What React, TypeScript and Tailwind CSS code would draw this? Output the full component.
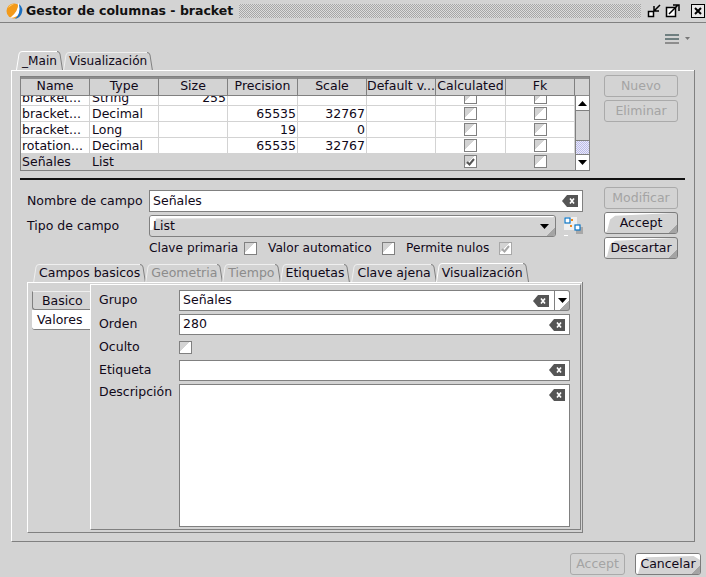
import type { ReactNode } from "react";

const font = "font-['DejaVu_Sans',sans-serif]";

const columns = [
  { name: "Name", w: "w-[69px]" },
  { name: "Type", w: "w-[69px]" },
  { name: "Size", w: "w-[69px]" },
  { name: "Precision", w: "w-[70px]" },
  { name: "Scale", w: "w-[69px]" },
  { name: "Default v...", w: "w-[69px]" },
  { name: "Calculated", w: "w-[70px]" },
  { name: "Fk", w: "w-[69px]" },
];

const rows = [
  { name: "bracket...", type: "String", size: "255", precision: "", scale: "" },
  { name: "bracket...", type: "Decimal", size: "", precision: "65535", scale: "32767" },
  { name: "bracket...", type: "Long", size: "", precision: "19", scale: "0" },
  { name: "rotation...", type: "Decimal", size: "", precision: "65535", scale: "32767" },
  { name: "Señales", type: "List", size: "", precision: "", scale: "", selected: true },
];

function Bevel({ points }: { points: string }) {
  return (
    <>
      <svg
        className="absolute inset-0 h-full w-full"
        viewBox="0 0 100 100"
        preserveAspectRatio="none"
      >
        <polygon points={points} fill="#fff" />
      </svg>
      <div className="absolute bottom-0 right-0 h-[8px] w-[8px] bg-[linear-gradient(135deg,transparent_50%,#a4a4a4_50%)]" />
    </>
  );
}

function Button({
  label,
  w,
  disabled,
  strong,
}: {
  label: string;
  w: string;
  disabled?: boolean;
  strong?: boolean;
}) {
  return (
    <div
      className={`relative flex h-[22px] items-center justify-center overflow-hidden rounded-[3px] border ${w} ${
        disabled ? "border-[#aaaaaa] text-[#a4a4a4]" : "border-[#7c7c7c] text-[#100818]"
      }`}
    >
      {!disabled && (
        <Bevel
          points={
            strong
              ? "0,0 100,0 100,30 90,10 16,16 8,45 3,100 0,100"
              : "0,0 96,0 14,14 7,32 3,90 0,100"
          }
        />
      )}
      <span className="relative">{label}</span>
    </div>
  );
}

function Check({ checked, dim }: { checked?: boolean; dim?: boolean }) {
  return (
    <div
      className={`flex h-[13px] w-[13px] shrink-0 items-center justify-center border ${
        dim ? "border-[#a8a8a8]" : "border-[#808080]"
      } bg-[linear-gradient(135deg,#d3d3d3_45%,#ffffff_45%)]`}
    >
      {checked && (
        <svg width="9" height="8" viewBox="0 0 9 8">
          <path
            d="M1 4l2.5 2.5L8 1"
            fill="none"
            stroke={dim ? "#a8a8a8" : "#555"}
            strokeWidth="2"
          />
        </svg>
      )}
    </div>
  );
}

function ClearIcon() {
  return (
    <svg width="16" height="12" viewBox="0 0 16 12" className="shrink-0">
      <path d="M0 6L5 0h11v12H5z" fill="#555" />
      <path d="M8 3.5l4 5M12 3.5l-4 5" stroke="#fff" strokeWidth="1.6" />
    </svg>
  );
}

function Field({
  value,
  h = "h-[22px]",
  w,
  top,
}: {
  value?: string;
  h?: string;
  w: string;
  top?: boolean;
}) {
  return (
    <div
      className={`flex justify-between border border-[#808080] bg-white pl-[3px] pr-1 ${h} ${w} ${
        top ? "items-start pt-[4px]" : "items-center"
      }`}
    >
      <span>{value}</span>
      <ClearIcon />
    </div>
  );
}

function Caret({ up }: { up?: boolean }) {
  return (
    <svg width="9" height="5" viewBox="0 0 9 5">
      <path d={up ? "M0 5L4.5 0 9 5z" : "M0 0l4.5 5L9 0z"} fill="#000" />
    </svg>
  );
}

function Tab({
  label,
  active,
  disabled,
  lower,
  extra = "",
}: {
  label: string;
  active?: boolean;
  disabled?: boolean;
  lower?: boolean;
  extra?: string;
}) {
  return (
    <div
      className={`flex items-stretch ${active ? "h-[19px]" : "h-[18px]"} ${
        disabled ? "text-[#8c8c8c]" : "text-[#100818]"
      } ${lower ? "-mr-px" : ""} ${extra}`}
    >
      <svg width="6" height="19" viewBox="0 0 6 19" className="shrink-0">
        <path d="M0.5 19L3 3Q3.5 .5 6 .5" fill="none" stroke={active ? "#fff" : "#efefef"} />
      </svg>
      <div
        className={`flex items-center whitespace-nowrap border-t ${
          active ? "border-white" : "border-[#efefef]"
        }`}
      >
        {label}
      </div>
      <svg width="6" height="19" viewBox="0 0 6 19" className="shrink-0">
        <path d="M0 .5Q2.5 .5 3 3L5.5 19" fill="none" stroke="#808080" />
      </svg>
    </div>
  );
}

function Table() {
  return (
    <div className="flex h-[95px] w-[570px] flex-col border border-[#808080]">
      <div className="flex h-[19px] shrink-0">
        {columns.map((c) => (
          <div
            key={c.name}
            className={`flex items-center justify-center overflow-hidden whitespace-nowrap border-r border-t-2 border-b border-[#808080] border-t-[#8c8c8c] pb-[2px] ${c.w}`}
          >
            {c.name}
          </div>
        ))}
        <div className="flex-1 border-t-2 border-b border-[#8c8c8c]" />
      </div>
      <div className="flex min-h-0 flex-1">
        <div className="flex w-[554px] flex-col justify-end overflow-hidden">
          {rows.map((r, i) => (
            <div
              key={i}
              className={`flex h-4 shrink-0 border-b border-[#d3d3d3] ${
                r.selected ? "bg-[#d3d3d3]" : "bg-white"
              }`}
            >
              <div className="w-[69px] overflow-hidden whitespace-nowrap border-r border-[#d3d3d3] pl-px leading-[16px]">
                {r.name}
              </div>
              <div className="w-[69px] border-r border-[#d3d3d3] pl-[2px] leading-[16px]">
                {r.type}
              </div>
              <div className="w-[69px] border-r border-[#d3d3d3] pr-[1px] text-right leading-[16px]">
                {r.size}
              </div>
              <div className="w-[70px] border-r border-[#d3d3d3] pr-[1px] text-right leading-[16px]">
                {r.precision}
              </div>
              <div className="w-[69px] border-r border-[#d3d3d3] pr-[1px] text-right leading-[16px]">
                {r.scale}
              </div>
              <div className="w-[69px] border-r border-[#d3d3d3]" />
              <div className="flex w-[70px] items-center justify-center border-r border-[#d3d3d3]">
                <Check checked={r.selected} />
              </div>
              <div className="flex w-[69px] items-center justify-center border-r border-[#d3d3d3]">
                <Check />
              </div>
            </div>
          ))}
        </div>
        <div className="flex w-[14px] flex-col border-l border-[#808080]">
          <div className="flex h-[15px] items-center justify-center border-b border-[#808080] bg-white">
            <Caret up />
          </div>
          <div className="flex-1" />
          <div className="h-[15px] border-y border-[#808080] bg-[#cfcff0] bg-[repeating-conic-gradient(#b9b9ee_0_25%,#ececf4_0_50%)] bg-[length:2px_2px]" />
          <div className="flex h-[15px] items-center justify-center bg-white">
            <Caret />
          </div>
        </div>
      </div>
    </div>
  );
}

function FormRow({ label, w, children }: { label: string; w: string; children: ReactNode }) {
  return (
    <div className="flex items-center">
      <div className={w}>{label}</div>
      {children}
    </div>
  );
}

function LinkIcon() {
  return (
    <svg width="20" height="22" viewBox="0 0 20 22" className="ml-[7px]">
      <rect x="1" y="2" width="13" height="13" fill="#f0f0f0" />
      <rect x="2" y="3" width="5" height="5" fill="#fff" stroke="#0a74c4" strokeWidth="1.2" />
      <rect x="8" y="4" width="2" height="2" fill="#f08a1c" />
      <rect x="7" y="10" width="2" height="2" fill="#f08a1c" />
      <rect x="13" y="12" width="7" height="7" fill="#a8a8a8" />
      <rect x="12" y="10" width="5" height="5" fill="#fff" stroke="#0a74c4" strokeWidth="1.2" />
      <rect x="1" y="20" width="4" height="1" fill="#fff" />
    </svg>
  );
}

function TitleBar() {
  return (
    <div className="flex h-[23px] items-center border-b border-[#808080] pl-[6px] pr-px">
      <svg width="18" height="18" viewBox="0 0 18 18" className="shrink-0">
        <circle cx="8" cy="9" r="7.5" fill="#f39a1a" />
        <path d="M2 6a7 7 0 0 1 6-4Q4 4 2 6z" fill="#ffd27a" />
        <path d="M12 1Q13 9 4 16Q12 16 15.5 9Q16 4 12 1z" fill="#fff" />
        <path d="M13 2Q18 6 15.5 12Q13.5 16 9 17Q15 12 13 2z" fill="#1b6fc0" />
      </svg>
      <div className="ml-[2px] whitespace-nowrap text-[12.5px] font-bold text-[#111]">
        Gestor de columnas - bracket
      </div>
      <div className="mx-[6px] h-[14px] flex-1 bg-[repeating-conic-gradient(#a6a6a6_0_25%,#dcdcdc_0_50%)] bg-[length:2px_2px]" />
      <svg width="14" height="14" viewBox="0 0 14 14" className="shrink-0">
        <rect x="1.5" y="7.5" width="5" height="5" fill="#fff" stroke="#000" strokeWidth="1.5" />
        <path d="M13 1L7 7M7 2v5h5" fill="none" stroke="#000" strokeWidth="1.5" />
      </svg>
      <svg width="15" height="14" viewBox="0 0 15 14" className="ml-[4px] shrink-0">
        <rect x="1.5" y="3.5" width="9" height="9" fill="#fff" stroke="#000" strokeWidth="1.5" />
        <path d="M4 10L13 1M8 1h6v6" fill="none" stroke="#000" strokeWidth="1.5" />
      </svg>
      <svg width="14" height="14" viewBox="0 0 14 14" className="ml-[11px] shrink-0">
        <rect x="0.5" y="0.5" width="13" height="13" fill="#e8e8e8" stroke="#000" />
        <path d="M4 4l6 6M10 4l-6 6" stroke="#000" strokeWidth="2" />
      </svg>
    </div>
  );
}

function SideTabs() {
  return (
    <div className="flex w-[62px] shrink-0 flex-col pl-[4px] pt-[9px]">
      <div className="h-[19px] w-[58px] rounded-bl-[3px] border border-r-0 border-[#808080] border-t-[#efefef] pl-[9px] leading-[18px]">
        Basico
      </div>
      <div className="h-[20px] w-[58px] rounded-bl-[3px] border-b border-[#808080] bg-white pl-[5px] leading-[19px]">
        Valores
      </div>
    </div>
  );
}

export default function App() {
  return (
    <div className={`flex h-[577px] w-[706px] flex-col overflow-hidden bg-[#d3d3d3] text-[12.5px] text-[#100818] ${font}`}>
      <TitleBar />

      <div className="flex h-[27px] items-center justify-end pr-[16px] pt-[4px]">
        <svg width="14" height="10" viewBox="0 0 14 10">
          <rect y="0" width="14" height="2" fill="#6f7f80" />
          <rect y="4" width="14" height="2" fill="#6f7f80" />
          <rect y="8" width="14" height="2" fill="#8d8d8d" />
        </svg>
        <svg width="5" height="3" viewBox="0 0 5 3" className="ml-[6px]">
          <path d="M0 0h5L2.5 3z" fill="#777" />
        </svg>
      </div>

      <div className="flex h-[20px] items-end pl-[16px] text-[12.1px]">
        <Tab label="_Main" active />
        <Tab label="Visualización" />
      </div>

      <div className="mx-[11px] flex h-[472px] flex-col border-b border-l border-r border-[#808080] border-l-white border-t-0 shadow-[inset_0_1px_0_#fff]">
        <div className="flex pl-[8px] pt-[6px]">
          <Table />
          <div className="-mt-px ml-[14px] flex flex-col gap-[3px]">
            <Button label="Nuevo" w="w-[74px]" disabled />
            <Button label="Eliminar" w="w-[74px]" disabled />
          </div>
        </div>

        <div className="ml-[8px] mr-[9px] mt-[7px] h-[2px] bg-[#111]" />

        <div className="flex">
          <div className="flex w-[592px] flex-col pl-[15px] pt-[10px]">
            <FormRow label="Nombre de campo" w="w-[122px]">
              <Field value="Señales" w="w-[434px]" />
            </FormRow>
            <div className="mt-[3px]">
              <FormRow label="Tipo de campo" w="w-[122px]">
                <div className="relative flex h-[22px] w-[407px] items-center justify-between overflow-hidden rounded-[3px] border border-[#808080] pl-[3px] pr-[6px]">
                  <Bevel points="0,0 100,0 99.5,6 1.5,12 0.6,70 0,70" />
                  <span className="relative">List</span>
                  <span className="relative">
                    <Caret />
                  </span>
                </div>
                <LinkIcon />
              </FormRow>
            </div>
            <div className="ml-[122px] mt-[4px] flex h-[15px] items-center whitespace-nowrap text-[12.2px]">
              <span className="w-[95px]">Clave primaria</span>
              <Check />
              <span className="ml-[11px] w-[114px]">Valor automatico</span>
              <Check />
              <span className="ml-[11px] w-[93px]">Permite nulos</span>
              <Check checked dim />
            </div>

            <div className="mt-[6px] flex h-[20px] items-end pl-[6px]">
              <Tab label="Campos basicos" lower />
              <Tab label="Geometria" disabled lower />
              <Tab label="Tiempo" disabled lower />
              <Tab label="Etiquetas" lower />
              <Tab label="Clave ajena" lower extra="ml-[2px]" />
              <Tab label="Visualización" active lower />
            </div>

            <div className="flex h-[251px] w-[556px] border-b border-l border-r border-[#808080] border-l-white shadow-[inset_0_1px_0_#fff]">
              <SideTabs />
              <div className="my-[2px] flex w-[491px] flex-col border border-[#808080] border-l-white border-t-white pl-[8px] pt-[5px]">
                <FormRow label="Grupo" w="w-[80px]">
                  <div className="flex h-[21px] w-[391px] items-center">
                    <div className="flex h-full flex-1 items-center justify-between border border-[#808080] bg-white pl-[3px] pr-[5px]">
                      <span>Señales</span>
                      <ClearIcon />
                    </div>
                    <div className="flex h-full w-[15px] items-center justify-center rounded-r-[3px] border border-l-0 border-[#808080] bg-[linear-gradient(135deg,#ffffff_70%,#a8a8a8_70%)]">
                      <Caret />
                    </div>
                  </div>
                </FormRow>
                <div className="mt-[3px]">
                  <FormRow label="Orden" w="w-[80px]">
                    <Field value="280" h="h-[21px]" w="w-[391px]" />
                  </FormRow>
                </div>
                <div className="mt-[3px]">
                  <FormRow label="Oculto" w="w-[80px]">
                    <Check />
                  </FormRow>
                </div>
                <div className="mt-[3px]">
                  <FormRow label="Etiqueta" w="w-[80px]">
                    <Field h="h-[21px]" w="w-[391px]" />
                  </FormRow>
                </div>
                <div className="mt-[3px] flex items-start">
                  <div className="-mt-px w-[80px]">Descripción</div>
                  <Field h="h-[143px]" w="w-[391px]" top />
                </div>
              </div>
            </div>
          </div>

          <div className="flex flex-col gap-[3px] pt-[7px]">
            <Button label="Modificar" w="w-[74px]" disabled />
            <Button label="Accept" w="w-[74px]" />
            <Button label="Descartar" w="w-[74px]" />
          </div>
        </div>
      </div>

      <div className="flex justify-end pr-[5px] pt-[11px]">
        <Button label="Accept" w="w-[55px]" disabled />
        <div className="ml-[10px]">
          <Button label="Cancelar" w="w-[66px]" strong />
        </div>
      </div>
    </div>
  );
}
